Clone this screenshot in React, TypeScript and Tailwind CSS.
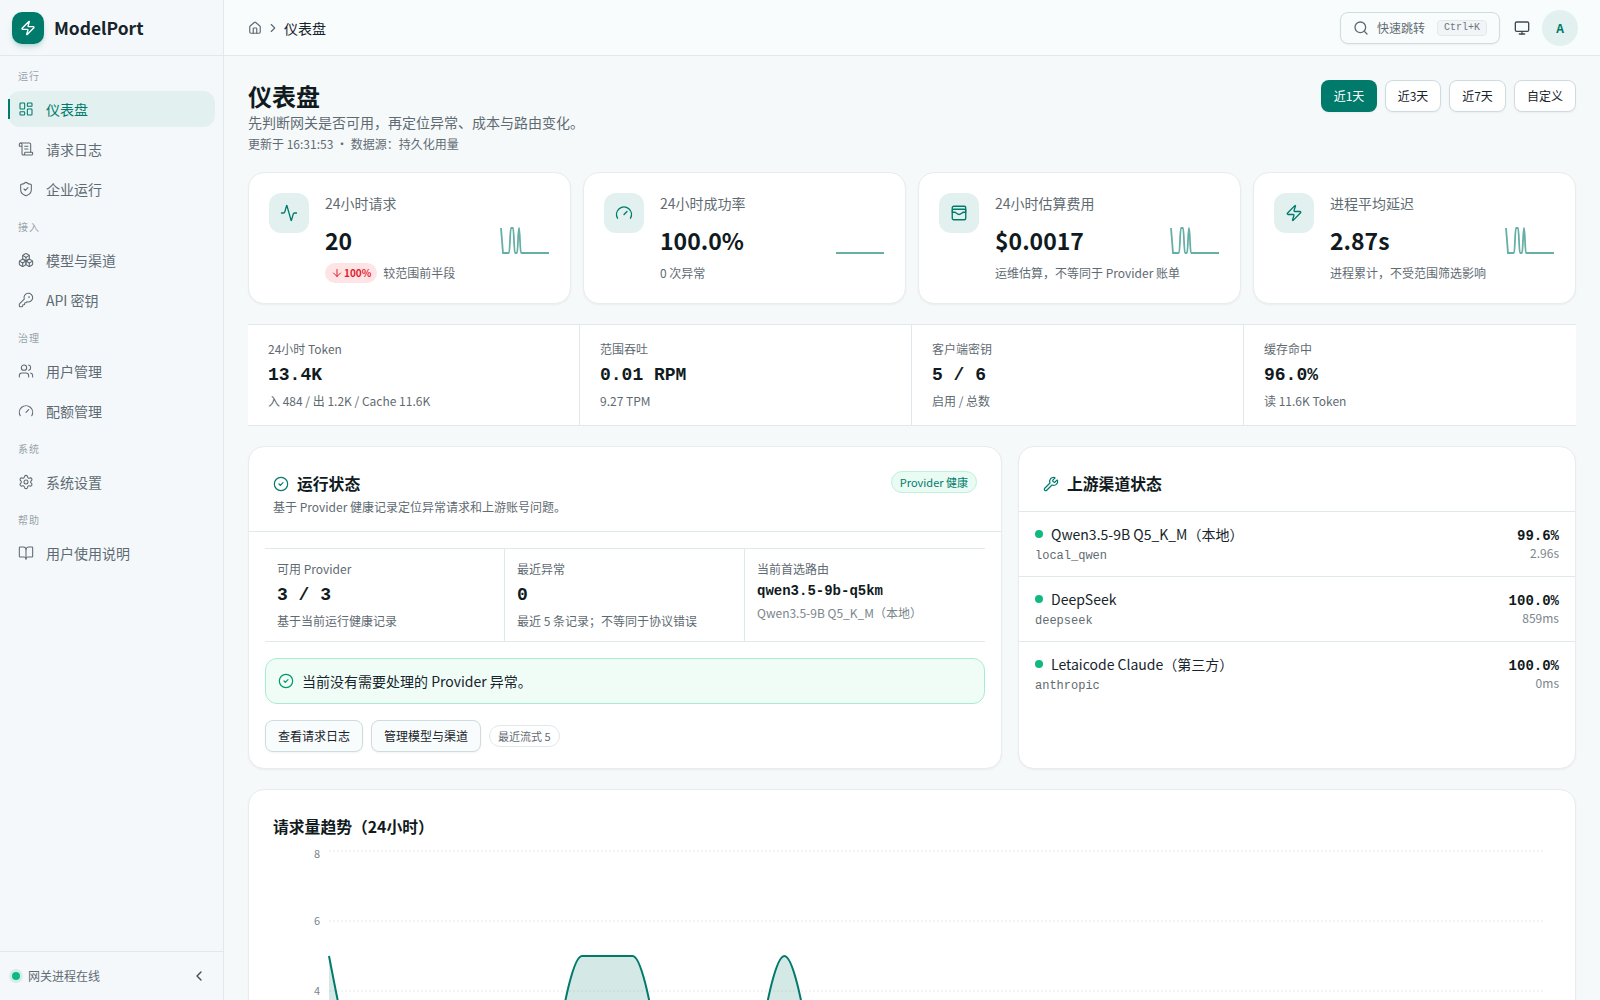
import {
  Activity,
  ArrowDown,
  BookOpen,
  Boxes,
  ChevronLeft,
  ChevronRight,
  CircleCheck,
  Gauge,
  House,
  KeyRound,
  LayoutDashboard,
  Monitor,
  ScrollText,
  Search,
  Settings,
  ShieldCheck,
  Users,
  WalletCards,
  Wrench,
  Zap,
} from "lucide-react";
import React from "react";

const navGroups = [
  { title: "运行", items: [{ label: "仪表盘", icon: LayoutDashboard, active: true }, { label: "请求日志", icon: ScrollText }, { label: "企业运行", icon: ShieldCheck }] },
  { title: "接入", items: [{ label: "模型与渠道", icon: Boxes }, { label: "API 密钥", icon: KeyRound }] },
  { title: "治理", items: [{ label: "用户管理", icon: Users }, { label: "配额管理", icon: Gauge }] },
  { title: "系统", items: [{ label: "系统设置", icon: Settings }] },
  { title: "帮助", items: [{ label: "用户使用说明", icon: BookOpen }] },
];

const mono = "font-['Liberation_Mono',monospace]";

const Sidebar = () => (
  <aside className="w-[224px] h-screen shrink-0 bg-[#f4f8fb] border-r border-[#e2e9ec] flex flex-col">
    <div className="h-[56px] shrink-0 border-b border-[#e2e9ec] flex items-center gap-[10px] px-3">
      <div className="h-8 w-8 rounded-[10px] bg-[#007a6b] flex items-center justify-center shadow-md shadow-[#007a6b]/20">
        <Zap className="h-4 w-4 text-white" />
      </div>
      <span className="text-[17.4px] font-semibold text-[#17242b] mt-[1px]">ModelPort</span>
    </div>
    <nav className="flex-1 px-2 pt-[9px]">
      {navGroups.map((group) => (
        <div key={group.title} className="mb-[9px]">
          <div className="h-[20px] px-[10px] flex items-center text-[10px] tracking-[1px] text-[#98a3a9]">{group.title}</div>
          <div className="flex flex-col gap-1 mt-[6px]">
            {group.items.map((item) => (
              <div
                key={item.label}
                className={
                  item.active
                    ? "relative h-9 flex items-center gap-3 px-[10px] rounded-xl bg-[#e2f1ef] text-[#007a6b] text-sm"
                    : "h-9 flex items-center gap-3 px-[10px] rounded-xl text-[#5f6b72] text-sm"
                }
              >
                {item.active && <div className="absolute left-0 top-2 bottom-2 w-[2px] bg-[#007a6b]" />}
                <item.icon className="h-4 w-4 shrink-0" strokeWidth={1.6} />
                <span>{item.label}</span>
              </div>
            ))}
          </div>
        </div>
      ))}
    </nav>
    <div className="h-[49px] shrink-0 border-t border-[#e2e9ec] flex items-center justify-between pl-3 pr-4">
      <div className="flex items-center gap-2 text-xs text-[#5f6b72]">
        <span className="h-2 w-2 rounded-full bg-[#10b981] ring-[3px] ring-[#10b981]/15" />
        网关进程在线
      </div>
      <ChevronLeft className="h-4 w-4 text-[#3f4b52]" />
    </div>
  </aside>
);

const Topbar = () => (
  <header className="h-[56px] shrink-0 border-b border-[#e2e9ec] bg-[#f9fcfd] flex items-center justify-between pl-6 pr-[22px]">
    <div className="flex items-center gap-1 text-sm text-[#17242b]">
      <House className="h-[14px] w-[14px] text-[#5f6b72]" />
      <ChevronRight className="h-[14px] w-[14px] text-[#5f6b72]" />
      <span>仪表盘</span>
    </div>
    <div className="flex items-center">
      <div className="h-8 w-[160px] rounded-lg border border-[#cfdcdf] bg-[#f9fcfd] shadow-xs flex items-center gap-2 pl-[12px] text-xs text-[#5f6b72]">
        <Search className="h-4 w-4" />
        <span>快速跳转</span>
        <span className={`${mono} ml-[4px] rounded border border-[#e2e9ec] bg-[#f1f5f7] px-[6px] text-[10px] leading-[14px] text-[#6b777d]`}>Ctrl+K</span>
      </div>
      <Monitor className="h-4 w-4 text-[#3f4b52] ml-[14px] mr-3" />
      <div className="h-9 w-9 rounded-full bg-[#e2f1ef] flex items-center justify-center text-xs font-semibold text-[#007a6b]">A</div>
    </div>
  </header>
);

const Spark = ({ flat }: { flat?: boolean }) => (
  <svg width="50" height="28" viewBox="0 0 50 28" className="absolute right-5 top-[54px]" fill="none">
    <path
      d={flat ? "M1 26H49" : "M1 1L3 26H9C10 26 10 1 11 1H13C14 1 14 26 15 26H17C18 26 18 1 19 1C20 1 20 26 21 26H49"}
      stroke="#007a6b"
      strokeOpacity="0.6"
      strokeWidth="1.8"
    />
  </svg>
);

const kpis = [
  { label: "24小时请求", value: "20", icon: Activity, sub: "较范围前半段", badge: true },
  { label: "24小时成功率", value: "100.0%", icon: Gauge, sub: "0 次异常", flat: true },
  { label: "24小时估算费用", value: "$0.0017", icon: WalletCards, sub: "运维估算，不等同于 Provider 账单" },
  { label: "进程平均延迟", value: "2.87s", icon: Zap, sub: "进程累计，不受范围筛选影响" },
];

const KpiCard = ({ kpi }: { kpi: (typeof kpis)[number] }) => (
  <div className="relative h-[132px] rounded-2xl border border-[#e6edf0] bg-white shadow-xs pt-5 pl-5 flex gap-4">
    <div className="h-10 w-10 shrink-0 rounded-xl bg-[#e2f1ef] flex items-center justify-center">
      <kpi.icon className="h-[18px] w-[18px] text-[#007a6b]" strokeWidth={1.8} />
    </div>
    <div>
      <div className="text-sm leading-5 text-[#5f6b72]">{kpi.label}</div>
      <div className="text-[23px] leading-8 font-semibold text-[#101a20] mt-[11px]">{kpi.value}</div>
      <div className="flex items-center gap-[6px] text-xs leading-5 text-[#5f6b72] mt-[7px]">
        {kpi.badge && (
          <span className="h-5 px-[6px] gap-[1px] rounded-full bg-[#ffe4e6] text-[#e11d2e] text-[10px] font-semibold flex items-center">
            <ArrowDown className="h-3 w-3" />
            100%
          </span>
        )}
        {kpi.sub}
      </div>
    </div>
    <Spark flat={kpi.flat} />
  </div>
);

const strip = [
  { label: "24小时 Token", value: "13.4K", sub: "入 484 / 出 1.2K / Cache 11.6K" },
  { label: "范围吞吐", value: "0.01 RPM", sub: "9.27 TPM" },
  { label: "客户端密钥", value: "5 / 6", sub: "启用 / 总数" },
  { label: "缓存命中", value: "96.0%", sub: "读 11.6K Token" },
];

const facts = [
  { label: "可用 Provider", value: "3 / 3", sub: "基于当前运行健康记录" },
  { label: "最近异常", value: "0", sub: "最近 5 条记录；不等同于协议错误" },
];

const channels = [
  { name: "Qwen3.5-9B Q5_K_M（本地）", code: "local_qwen", rate: "99.6%", latency: "2.96s" },
  { name: "DeepSeek", code: "deepseek", rate: "100.0%", latency: "859ms" },
  { name: "Letaicode Claude（第三方）", code: "anthropic", rate: "100.0%", latency: "0ms" },
];

const StatusCard = () => (
  <div className="rounded-2xl border border-[#e6edf0] bg-white shadow-xs h-[323px]">
    <div className="h-[85px] border-b border-[#dfe8ea] px-6 pt-[25px] flex justify-between">
      <div>
        <div className="flex items-center gap-2 text-[15.8px] leading-6 font-semibold text-[#101a20]">
          <CircleCheck className="h-4 w-4 text-[#007a6b]" strokeWidth={1.8} />
          运行状态
        </div>
        <div className="text-xs leading-5 text-[#5f6b72] mt-[1px]">基于 Provider 健康记录定位异常请求和上游账号问题。</div>
      </div>
      <div className="h-[22px] px-2 -mt-[1px] rounded-full border border-[#bff0dc] bg-[#e9fbf3] text-[11px] text-[#007a6b] flex items-center">Provider 健康</div>
    </div>
    <div className="px-4 pt-4">
      <div className="grid grid-cols-3 border-y border-[#dfe8ea]">
        {facts.map((f) => (
          <div key={f.label} className="h-[92px] px-3 pt-[10px] border-r border-[#dfe8ea]">
            <div className="text-xs leading-5 text-[#5f6b72]">{f.label}</div>
            <div className={`${mono} text-lg leading-7 font-bold text-[#101a20] mt-[2px]`}>{f.value}</div>
            <div className="text-xs leading-5 text-[#5f6b72] mt-[2px]">{f.sub}</div>
          </div>
        ))}
        <div className="h-[92px] px-3 pt-[10px]">
          <div className="text-xs leading-5 text-[#5f6b72]">当前首选路由</div>
          <div className={`${mono} text-sm leading-5 font-bold text-[#101a20] mt-[2px]`}>qwen3.5-9b-q5km</div>
          <div className="text-xs leading-5 text-[#7b868c] mt-[2px]">Qwen3.5-9B Q5_K_M（本地）</div>
        </div>
      </div>
      <div className="h-[46px] mt-4 rounded-xl border border-[#a7ecd0] bg-[#f0fdf7] flex items-center gap-2 px-3 text-sm text-[#17242b]">
        <CircleCheck className="h-4 w-4 text-[#059669]" strokeWidth={1.8} />
        当前没有需要处理的 Provider 异常。
      </div>
      <div className="flex items-center gap-2 mt-4">
        <div className="h-8 px-3 rounded-lg border border-[#cfdcdf] bg-[#f9fcfd] shadow-xs text-xs text-[#17242b] flex items-center">查看请求日志</div>
        <div className="h-8 px-3 rounded-lg border border-[#cfdcdf] bg-[#f9fcfd] shadow-xs text-xs text-[#17242b] flex items-center">管理模型与渠道</div>
        <div className="h-[22px] px-2 rounded-full border border-[#dfe8ea] text-[11px] text-[#5f6b72] flex items-center">最近流式 5</div>
      </div>
    </div>
  </div>
);

const ChannelCard = () => (
  <div className="rounded-2xl border border-[#e6edf0] bg-white shadow-xs h-[323px]">
    <div className="h-[65px] border-b border-[#dfe8ea] pl-6 pt-[25px] flex items-start gap-2 text-[15.8px] leading-6 font-semibold text-[#101a20]">
      <Wrench className="h-4 w-4 text-[#007a6b] mt-1" strokeWidth={1.8} />
      上游渠道状态
    </div>
    {channels.map((c) => (
      <div key={c.code} className="h-[65px] border-b border-[#dfe8ea] last:border-b-0 px-4 pt-[12px] flex justify-between">
        <div>
          <div className="flex items-center gap-2 text-sm leading-5 text-[#17242b]">
            <span className="h-2 w-2 rounded-full bg-[#10b981]" />
            {c.name}
          </div>
          <div className={`${mono} text-xs leading-5 text-[#5f6b72] mt-[2px]`}>{c.code}</div>
        </div>
        <div className="text-right mt-[2px]">
          <div className={`${mono} text-sm leading-5 font-bold text-[#101a20]`}>{c.rate}</div>
          <div className="text-xs leading-5 text-[#7b868c] -mt-[3px]">{c.latency}</div>
        </div>
      </div>
    ))}
  </div>
);

const step = 50.6;
const top = 61;
const pts = Array.from({ length: 25 }, (_, i) => ({ x: 80 + i * step, v: [0, 5, 6, 9].includes(i) ? 5 : 0 }));
const y = (v: number) => top + (8 - v) * 35;
let linePath = `M${pts[0].x} ${y(pts[0].v)}`;
pts.slice(1).forEach((p, i) => {
  const prev = pts[i];
  const k = step / 3;
  const cy1 = i === 0 ? y(prev.v) + (y(p.v) - y(prev.v)) / 2 : y(prev.v);
  linePath += `C${prev.x + k} ${cy1} ${p.x - k} ${y(p.v)} ${p.x} ${y(p.v)}`;
});
const areaPath = `${linePath}V${y(0)}H${pts[0].x}Z`;

const TrendCard = () => (
  <div className="rounded-2xl border border-[#e6edf0] bg-white shadow-xs h-[420px] relative">
    <div className="pl-6 pt-[25px] text-[15.8px] leading-6 font-semibold text-[#101a20]">请求量趋势（24小时）</div>
    <svg width="1326" height="380" className="absolute left-0 top-0" fill="none">
      {[8, 6, 4, 2, 0].map((v) => (
        <line key={v} x1="80" x2="1294" y1={y(v)} y2={y(v)} stroke="#eef2f4" strokeWidth="1.5" strokeDasharray="2 2" />
      ))}
      {[8, 6, 4].map((v) => (
        <text key={v} x="71" y={y(v) + (v === 8 ? 7 : 4)} textAnchor="end" fontSize="11" fill="#7b868c">{v}</text>
      ))}
      <path d={areaPath} fill="#007a6b" fillOpacity="0.17" />
      <path d={linePath} stroke="#007a6b" strokeWidth="2" />
    </svg>
  </div>
);

export default function App() {
  return (
    <div className="h-screen flex overflow-hidden bg-[#f6f9fa] font-['Noto_Sans_CJK_SC','Noto_Sans',sans-serif]">
      <Sidebar />
      <div className="flex-1 min-w-0 flex flex-col">
        <Topbar />
        <main className="flex-1 overflow-hidden px-6 pt-6">
          <div className="flex justify-between items-start">
            <div>
              <h1 className="text-2xl leading-8 font-semibold text-[#101a20]">仪表盘</h1>
              <p className="text-sm leading-5 text-[#5f6b72]">先判断网关是否可用，再定位异常、成本与路由变化。</p>
              <p className="text-xs leading-5 text-[#5f6b72] mt-[2px]">更新于 16:31:53 · 数据源：持久化用量</p>
            </div>
            <div className="flex gap-2">
              <div className="h-8 w-[56px] rounded-lg bg-[#007a6b] text-white text-xs flex items-center justify-center shadow-xs">近1天</div>
              <div className="h-8 w-[56px] rounded-lg border border-[#cfdcdf] bg-white text-[#17242b] text-xs flex items-center justify-center shadow-xs">近3天</div>
              <div className="h-8 w-[57px] rounded-lg border border-[#cfdcdf] bg-white text-[#17242b] text-xs flex items-center justify-center shadow-xs">近7天</div>
              <div className="h-8 w-[62px] rounded-lg border border-[#cfdcdf] bg-white text-[#17242b] text-xs flex items-center justify-center shadow-xs">自定义</div>
            </div>
          </div>
          <div className="grid grid-cols-4 gap-3 mt-[18px]">
            {kpis.map((k) => (
              <KpiCard key={k.label} kpi={k} />
            ))}
          </div>
          <div className="grid grid-cols-4 mt-5 bg-white border-y border-[#dfe8ea]">
            {strip.map((s, i) => (
              <div key={s.label} className={i < 3 ? "h-[100px] px-5 pt-[14px] border-r border-[#dfe8ea]" : "h-[100px] px-5 pt-[14px]"}>
                <div className="text-xs leading-5 text-[#5f6b72]">{s.label}</div>
                <div className={`${mono} text-lg leading-7 font-bold text-[#101a20] mt-[2px]`}>{s.value}</div>
                <div className="text-xs leading-5 text-[#5f6b72] mt-[2px]">{s.sub}</div>
              </div>
            ))}
          </div>
          <div className="grid grid-cols-[754px_1fr] gap-4 mt-5">
            <StatusCard />
            <ChannelCard />
          </div>
          <div className="mt-5">
            <TrendCard />
          </div>
        </main>
      </div>
    </div>
  );
}
